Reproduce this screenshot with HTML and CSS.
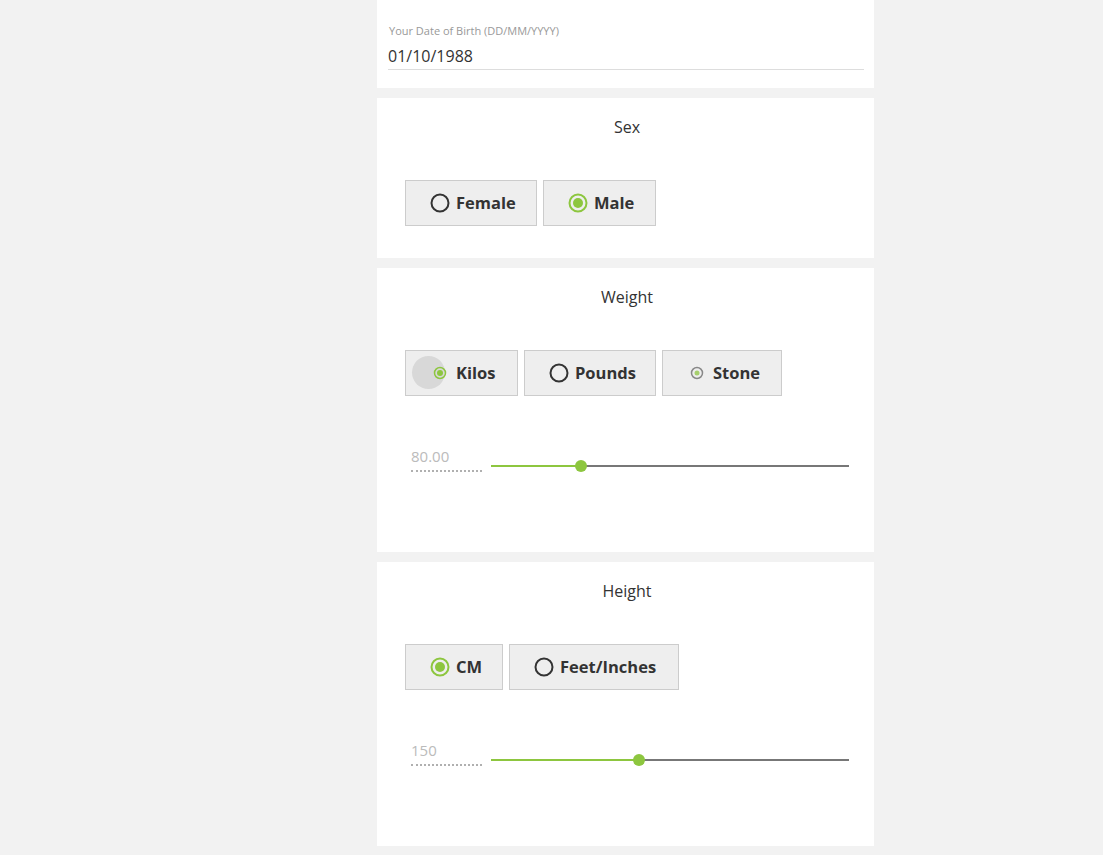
FILE: index.html
```html
<!DOCTYPE html>
<html>
<head>
<meta charset="utf-8">
<link rel="stylesheet" href="styles.css">
</head>
<body>
<div class="page">
  <div class="column">
    <section class="card card-dob">
      <label class="dob-label">Your Date of Birth (DD/MM/YYYY)</label>
      <div class="dob-value">01/10/1988</div>
    </section>

    <section class="card">
      <h2 class="title">Sex</h2>
      <div class="options">
        <button class="opt opt-female">
          <svg class="radio" width="20" height="20" viewBox="0 0 20 20"><circle cx="10" cy="10" r="8.5" fill="none" stroke="#333" stroke-width="2"/></svg>
          <span class="opt-text">Female</span>
        </button>
        <button class="opt opt-male">
          <svg class="radio" width="20" height="20" viewBox="0 0 20 20"><circle cx="10" cy="10" r="8.5" fill="none" stroke="#8dc63f" stroke-width="2"/><circle cx="10" cy="10" r="5" fill="#8dc63f"/></svg>
          <span class="opt-text">Male</span>
        </button>
      </div>
    </section>

    <section class="card">
      <h2 class="title">Weight</h2>
      <div class="options">
        <button class="opt opt-kilos">
          <span class="ripple"></span>
          <svg class="radio" width="20" height="20" viewBox="0 0 20 20"><circle cx="10" cy="10" r="5.5" fill="none" stroke="#8dc63f" stroke-width="1.5"/><circle cx="10" cy="10" r="3" fill="#8dc63f"/></svg>
          <span class="opt-text">Kilos</span>
        </button>
        <button class="opt opt-pounds">
          <svg class="radio" width="20" height="20" viewBox="0 0 20 20"><circle cx="10" cy="10" r="8.5" fill="none" stroke="#333" stroke-width="2"/></svg>
          <span class="opt-text">Pounds</span>
        </button>
        <button class="opt opt-stone">
          <svg class="radio" width="20" height="20" viewBox="0 0 20 20"><circle cx="10" cy="10" r="5.5" fill="none" stroke="#888" stroke-width="1.5"/><circle cx="10" cy="10" r="2.5" fill="#a6cf6d"/></svg>
          <span class="opt-text">Stone</span>
        </button>
      </div>
      <div class="slider-row">
        <div class="field">80.00</div>
        <div class="track">
          <div class="fill" style="width:25.1%"></div>
          <div class="thumb" style="left:25.1%"></div>
        </div>
      </div>
    </section>

    <section class="card">
      <h2 class="title">Height</h2>
      <div class="options">
        <button class="opt opt-cm">
          <svg class="radio" width="20" height="20" viewBox="0 0 20 20"><circle cx="10" cy="10" r="8.5" fill="none" stroke="#8dc63f" stroke-width="2"/><circle cx="10" cy="10" r="5" fill="#8dc63f"/></svg>
          <span class="opt-text">CM</span>
        </button>
        <button class="opt opt-feet">
          <svg class="radio" width="20" height="20" viewBox="0 0 20 20"><circle cx="10" cy="10" r="8.5" fill="none" stroke="#333" stroke-width="2"/></svg>
          <span class="opt-text">Feet/Inches</span>
        </button>
      </div>
      <div class="slider-row">
        <div class="field">150</div>
        <div class="track">
          <div class="fill" style="width:41.3%"></div>
          <div class="thumb" style="left:41.3%"></div>
        </div>
      </div>
    </section>
  </div>
</div>
</body>
</html>
```

FILE: styles.css
```css
html, body {
  margin: 0;
  padding: 0;
  background: #f2f2f2;
  font-family: "Open Sans", "Noto Sans", sans-serif;
  color: #333;
}

.page {
  padding-left: 377px;
}

.column {
  width: 497px;
  display: flex;
  flex-direction: column;
  gap: 10px;
}

.card {
  background: #fff;
  padding: 19px 25px 32px 28px;
  box-sizing: border-box;
}

.card-dob {
  height: 88px;
  padding: 24px 10px 0 11px;
  display: flex;
  flex-direction: column;
}

.dob-label {
  font-size: 11px;
  line-height: 14px;
  color: #999;
  padding-left: 1px;
}

.dob-value {
  font-size: 16px;
  line-height: 22px;
  color: #333;
  margin-top: 7px;
  padding-bottom: 2px;
  border-bottom: 1px solid #ddd;
}

.title {
  margin: 0;
  font-size: 16px;
  line-height: 20px;
  font-weight: 400;
  text-align: center;
  color: #333;
}

.options {
  display: flex;
  gap: 6px;
  margin-top: 43px;
}

.opt {
  position: relative;
  height: 46px;
  box-sizing: border-box;
  background: #eee;
  border: 1px solid #ccc;
  border-radius: 0;
  display: flex;
  align-items: center;
  gap: 6px;
  padding: 0 0 0 23px;
  font-family: "Open Sans", "Noto Sans", sans-serif;
  font-weight: 700;
  font-size: 16.5px;
  color: #333;
  overflow: hidden;
}

.opt-text {
  position: relative;
  top: -1px;
  margin-left: 1px;
}
.radio { position: relative; flex: none; left: 1px; }

.opt-female { width: 132px; }
.opt-male { width: 113px; }
.opt-kilos { width: 113px; }
.opt-pounds { width: 132px; }
.opt-stone { width: 120px; }
.opt-cm { width: 98px; }
.opt-feet { width: 170px; }

.ripple {
  position: absolute;
  left: 6px;
  top: 5px;
  width: 33px;
  height: 33px;
  border-radius: 50%;
  background: #d8d8d8;
}

.slider-row {
  display: flex;
  align-items: center;
  gap: 9px;
  margin-top: 52px;
  margin-left: 6px;
  height: 36px;
  margin-bottom: 36px;
}

.field {
  width: 71px;
  box-sizing: border-box;
  font-size: 15px;
  line-height: 20px;
  color: #bbb;
  padding-bottom: 4px;
  border-bottom: 2px dotted #b0b0b0;
  margin-top: -14px;
}

.track {
  position: relative;
  flex: 1;
  height: 2px;
  background: #777;
}

.fill {
  position: absolute;
  left: 0;
  top: 0;
  height: 2px;
  background: #8dc63f;
}

.thumb {
  position: absolute;
  top: -5px;
  width: 12px;
  height: 12px;
  margin-left: -6px;
  border-radius: 50%;
  background: #8dc63f;
}
```
